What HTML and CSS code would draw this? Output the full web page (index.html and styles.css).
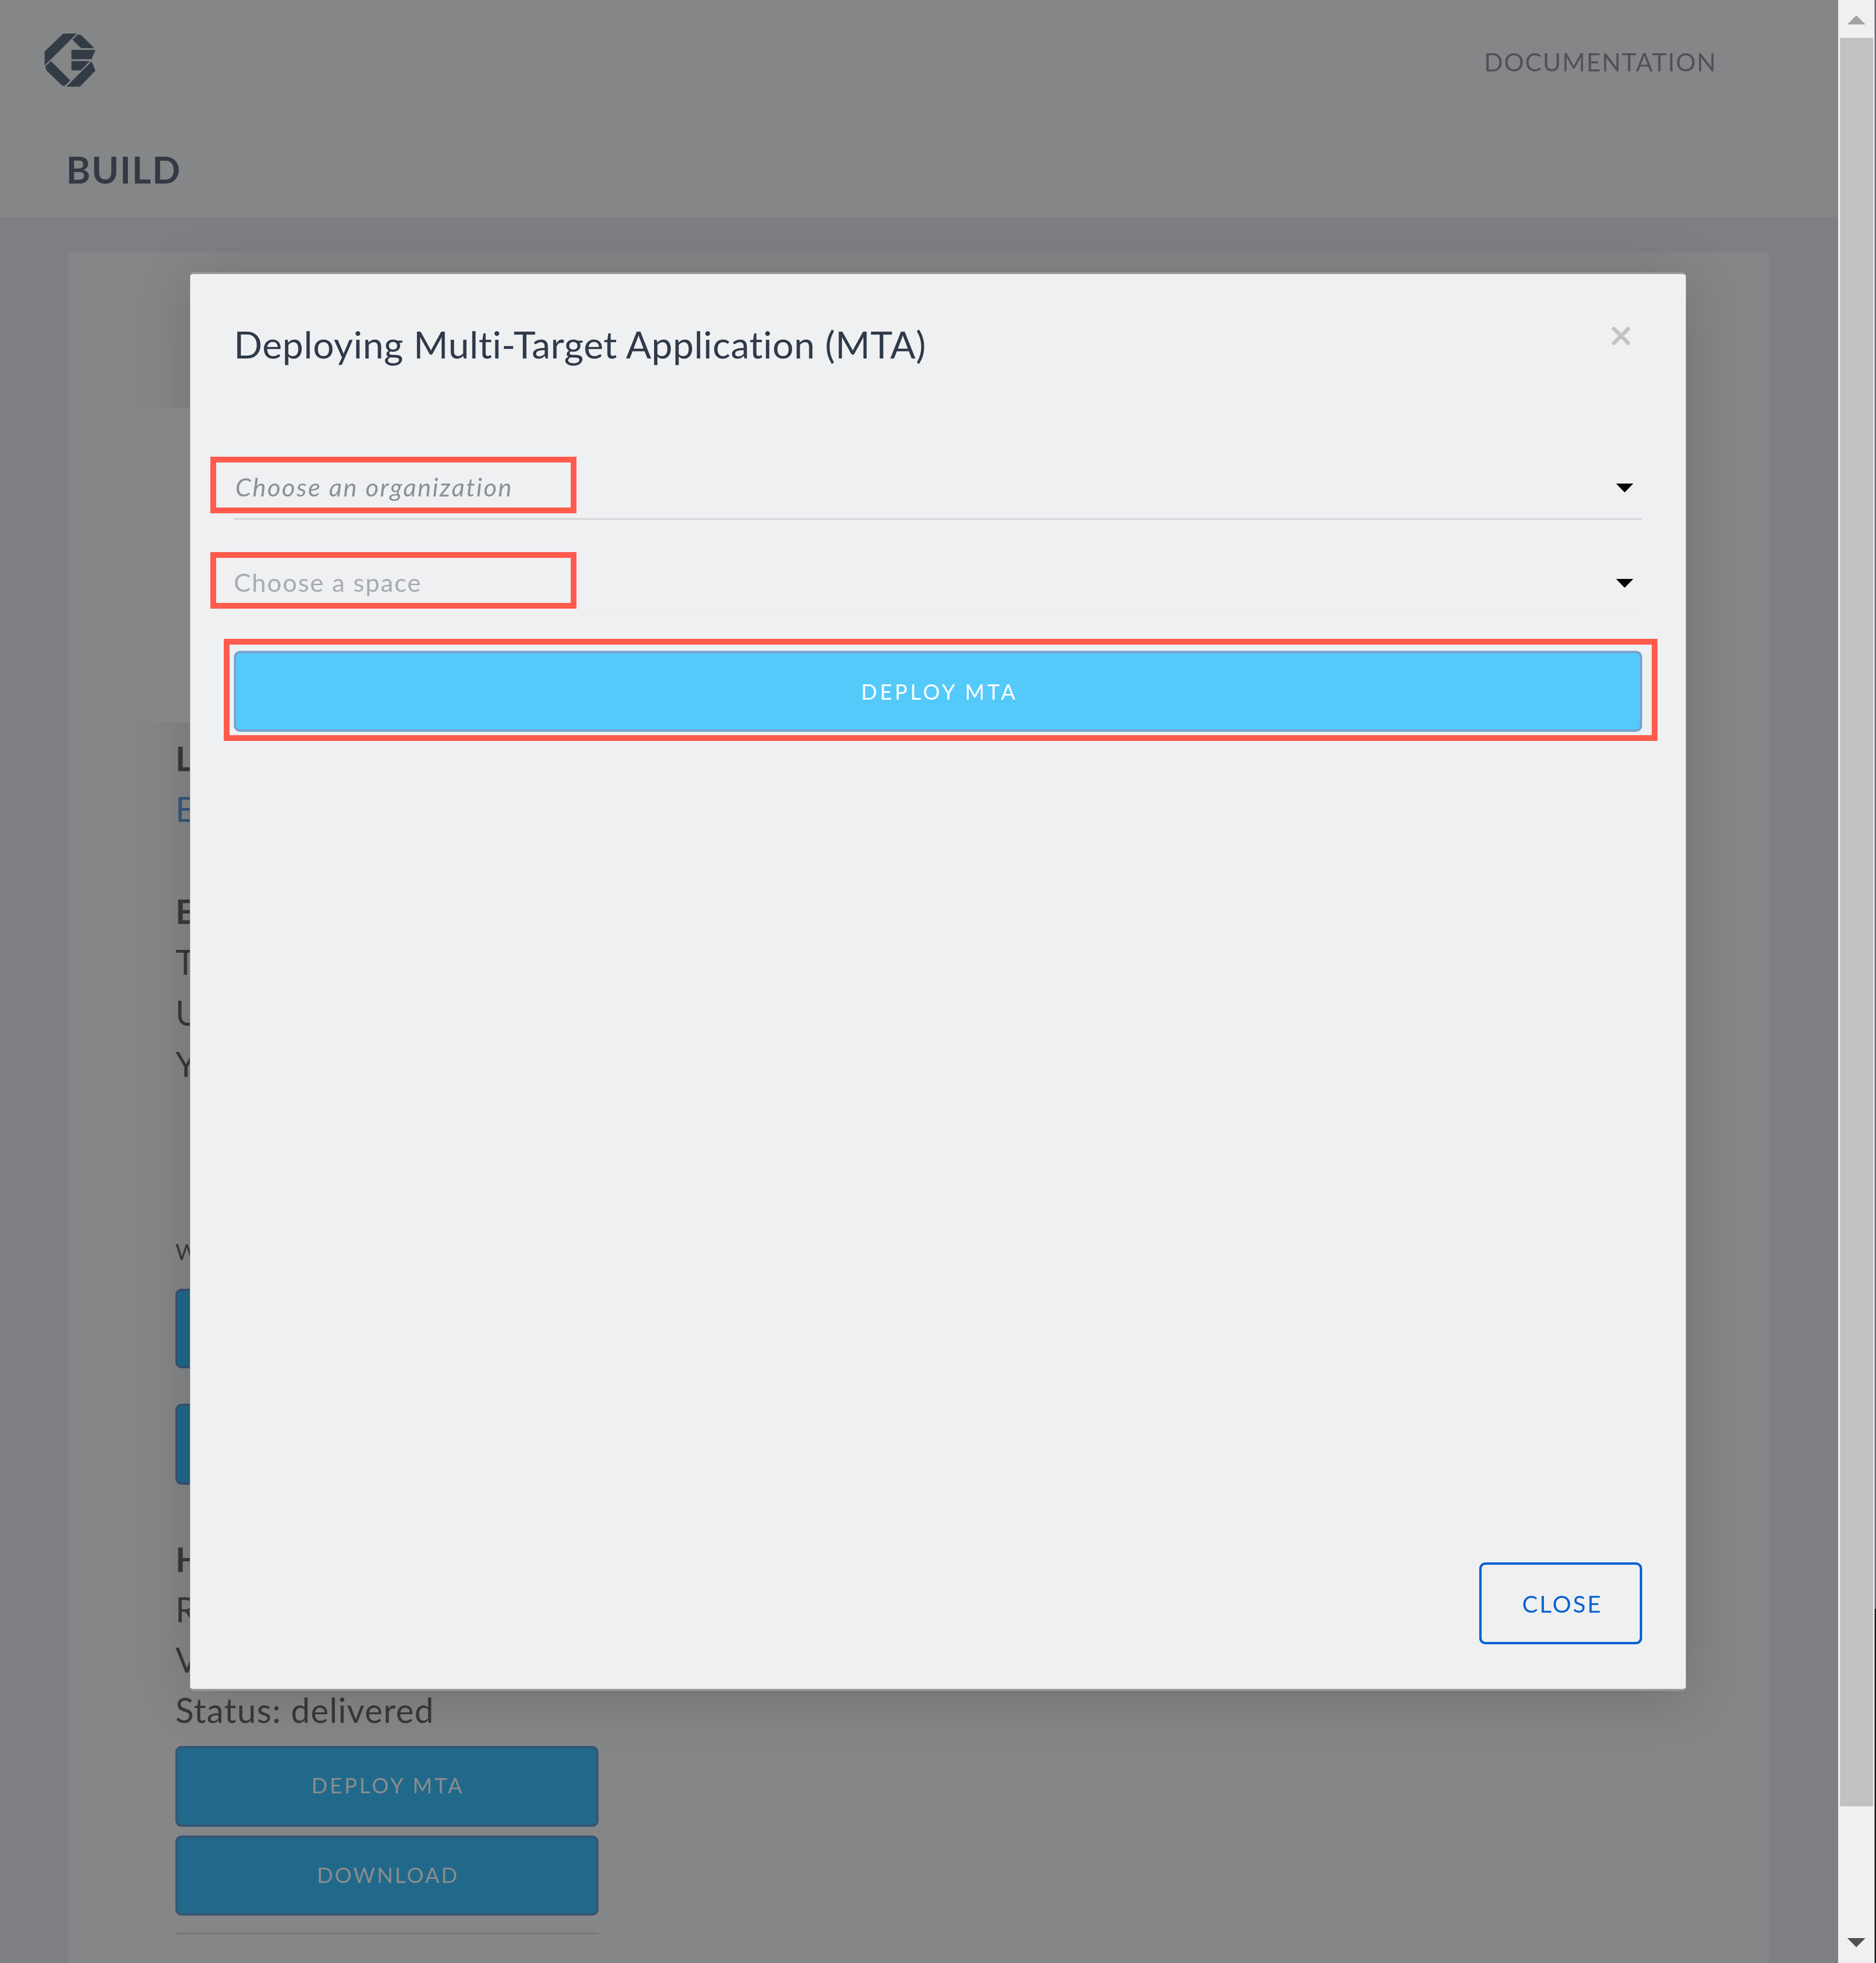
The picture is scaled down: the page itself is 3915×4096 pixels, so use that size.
FILE: index.html
```
<!DOCTYPE html>
<html lang="en">
<head>
<meta charset="utf-8">
<title>Build</title>
<link rel="stylesheet" href="styles.css">
</head>
<body>
<div class="window">
  <div class="page">
    <header class="header">
      <div class="topbar">
        <svg class="logo" viewBox="0 0 660 600" aria-hidden="true">
          <path d="M272 90H382L120 350V236Z"/>
          <path d="M388 98Q404 95 419 104L524 208H416L346 139Z"/>
          <path d="M338 222H533L502 298H338Z"/>
          <path d="M338 314H487L416 389H338Z"/>
          <path d="M502 316L533 391L408 521H297Z"/>
          <path d="M172 314L328 470L286 512Q272 518 258 508L140 394Q125 374 128 354Z"/>
        </svg>
        <a class="nav-link">DOCUMENTATION</a>
      </div>
      <h1 class="page-title">BUILD</h1>
    </header>
    <main class="panel">
      <div class="column">
        <p class="row strong">L</p>
        <p class="row link">E</p>
        <p class="row"></p>
        <p class="row strong">E</p>
        <p class="row">T</p>
        <p class="row">U</p>
        <p class="row">Y</p>
        <p class="note">W</p>
        <div class="btn dim first"></div>
        <div class="btn dim second"></div>
        <div class="result">
          <p class="row strong">H</p>
          <p class="row">R</p>
          <p class="row">V</p>
          <p class="row">Status: delivered</p>
        </div>
        <div class="btn dim deploy">DEPLOY MTA</div>
        <div class="btn dim download">DOWNLOAD</div>
        <hr class="rule">
      </div>
    </main>
  </div>
  <div class="scrollbar">
    <div class="arrow up"></div>
    <div class="thumb"></div>
    <div class="arrow down"></div>
  </div>
  <div class="edge"></div>

  <section class="modal">
    <div class="modal-head">
      <h2 class="modal-title">Deploying Multi-Target Application (MTA)</h2>
      <svg class="dismiss" viewBox="0 0 38 38" aria-hidden="true"><path d="M4 4L34 34M34 4L4 34"/></svg>
    </div>
    <div class="field"><span class="placeholder active">Choose an organization</span><i class="caret"></i></div>
    <div class="field disabled"><span class="placeholder">Choose a space</span><i class="caret"></i></div>
    <div class="btn primary">DEPLOY MTA</div>
    <div class="btn close">CLOSE</div>
  </section>
  <div class="shade-gap"></div>
  <div class="mark mark-org"></div>
  <div class="mark mark-space"></div>
  <div class="mark mark-deploy"></div>
</div>
</body>
</html>
```
FILE: styles.css
```
* { box-sizing: border-box; margin: 0; padding: 0; }
body { width: 3915px; height: 4096px; overflow: hidden; font-family: Lato, "Open Sans", sans-serif; font-weight: 400; }
.window { position: relative; display: grid; grid-template-columns: 3836px 76px 3px; width: 3915px; height: 4096px; overflow: hidden; }
.page { display: flex; flex-direction: column; height: 4096px; overflow: hidden; background: #7e7f83; }

.header { flex: none; height: 453px; background: #858687; }
.topbar { display: flex; justify-content: space-between; align-items: center; height: 247px; padding: 0 253px 0 62px; }
.logo { width: 170px; height: 154px; fill: #333b46; }
.nav-link { padding-top: 10px; font-size: 52px; line-height: 60px; letter-spacing: 2.2px; color: #505257; }
.page-title { margin-top: 56px; padding-left: 138px; font-size: 77px; line-height: 100px; font-weight: 700; letter-spacing: 2.2px; color: #333a45; }

.panel { flex: 1; margin: 74px 144px 0 143px; padding: 1002px 0 0 223px; background: #858687; }
.column { width: 883px; }
.row { height: 106.3px; font-size: 71px; line-height: 106.3px; letter-spacing: 1.5px; color: #393939; white-space: nowrap; }
.strong { font-weight: 700; }
.link { color: #35587a; }
.note { margin-top: 309px; font-size: 46px; line-height: 60px; color: #393939; }
.result { margin-top: 102px; }
.result .row { height: 105.1px; line-height: 105.1px; }

.btn { display: flex; align-items: center; justify-content: center; border: 5px solid; border-radius: 13px; font-size: 43px; line-height: 1; }
.dim { height: 168px; background: #21698a; border-color: #355675; color: #8a8c8d; }
.first { margin-top: 47px; height: 166px; }
.second { margin-top: 74px; height: 169px; }
.deploy { margin-top: 23px; height: 169px; padding: 0 0 5px 4px; font-size: 44px; letter-spacing: 4.9px; }
.download { margin-top: 18px; height: 167px; padding: 0 0 3px 4px; font-size: 44px; letter-spacing: 3.8px; }
.rule { margin-top: 36px; border: 0; height: 3px; background: #737476; }

.scrollbar { display: flex; flex-direction: column; align-items: center; background: #f0f0f0; }
.arrow { width: 38px; height: 19px; }
.up { margin-top: 32px; background: #a3a3a3; clip-path: polygon(50% 0, 100% 100%, 0 100%); }
.down { margin-top: auto; margin-bottom: 33px; background: #505050; clip-path: polygon(0 0, 100% 0, 50% 100%); }
.thumb { width: 69px; height: 3690px; margin-top: 28px; background: #c1c1c1; }
.edge { background: linear-gradient(#6d6e70 3357px, #1b1c1d 3357px); }

.modal { position: absolute; left: 396px; top: 568px; width: 3123px; height: 2960px; display: flex; flex-direction: column; padding: 95px 91px 93px; background: #eef0f2; border: solid #999a9b; border-width: 4px 1px; border-radius: 8px; box-shadow: 0 14px 116px rgba(0, 0, 0, .17); }
.modal-head { display: flex; justify-content: space-between; height: 100px; }
.modal-title { padding-top: 1px; font-size: 78px; line-height: 100px; font-weight: 400; letter-spacing: .7px; color: #2f3a4a; white-space: nowrap; }
.dismiss { width: 38px; height: 38px; margin: 15px 25px 0 0; fill: none; stroke: #c2c3c4; stroke-width: 8; stroke-linecap: round; }
.field { display: flex; justify-content: space-between; align-items: center; flex: none; height: 140px; margin-top: 178px; padding: 4px 18px 0 0; border-bottom: 4px solid #d8d9dc; }
.disabled { margin-top: 59px; border-color: #efeeef; }
.placeholder { padding-top: 1px; font-size: 53px; line-height: 60px; letter-spacing: 2.2px; color: #a9abb2; }
.active { padding-left: 3px; font-style: italic; letter-spacing: 2.9px; color: #8e9099; }
.caret { width: 37px; height: 19px; margin-top: 6px; background: #000; clip-path: polygon(0 0, 100% 0, 50% 100%); }
.primary { flex: none; height: 169px; margin-top: 74px; padding-left: 6px; background: #54cafb; border-color: #77a3d0; color: #fff; font-size: 44px; letter-spacing: 5.7px; }
.close { flex: none; align-self: flex-end; width: 340px; height: 171px; margin-top: auto; padding: 1px 0 0 7px; border-color: #0a62d0; color: #0a62d0; font-size: 49px; letter-spacing: 3.5px; }

/* flat strip beside the dialog where its shadow is hidden */
.shade-gap { position: absolute; left: 285px; top: 852px; width: 111px; height: 655px; background: #858687; }

.mark { position: absolute; border: 12px solid #ff5a4c; }
.mark-org { left: 439px; top: 953px; width: 764px; height: 118px; }
.mark-space { left: 439px; top: 1152px; width: 764px; height: 118px; }
.mark-deploy { left: 467px; top: 1333px; width: 2992px; height: 213px; }
```
